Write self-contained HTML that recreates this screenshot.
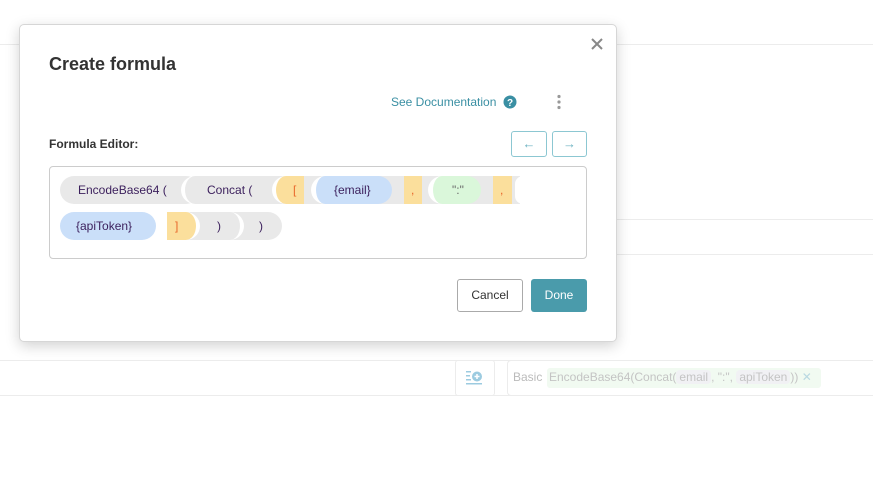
<!DOCTYPE html>
<html><head><style>
*{box-sizing:border-box;margin:0;padding:0}
body{width:873px;height:487px;background:#fff;position:relative;overflow:hidden;font-family:"Liberation Sans",sans-serif}
.a{position:absolute}
.ln{position:absolute;height:1px;background:#ececec}
.t{position:absolute;font-size:12px;line-height:28px;color:#3b1f5c;white-space:nowrap}
</style></head><body>
<div class="ln" style="left:0;right:0;top:44px"></div>
<div class="ln" style="left:617px;right:0;top:219px"></div>
<div class="ln" style="left:617px;right:0;top:254px"></div>
<div class="ln" style="left:0;right:0;top:360px"></div>
<div class="ln" style="left:0;right:0;top:395px"></div>
<div class="a" style="left:455px;top:360px;width:40px;height:36px;border:1px solid #ececec;border-radius:3px"></div>
<svg class="a" style="left:466px;top:370px" width="17" height="15" viewBox="0 0 17 15"><g fill="#9ccbe0"><rect x="0" y="1" width="5" height="1.5"/><rect x="0" y="5" width="4" height="1.5"/><rect x="0" y="9" width="5" height="1.5"/><rect x="0" y="13" width="16" height="1.5"/><circle cx="11" cy="6.5" r="5"/></g><path d="M11 4v5M8.5 6.5h5" stroke="#fff" stroke-width="1.5"/></svg>
<div class="a" style="left:507px;top:360px;width:380px;height:36px;border:1px solid #ececec;border-radius:4px"></div>
<div class="a" style="left:513px;top:370px;font-size:12px;color:#bbb">Basic</div>
<div class="a" style="left:547px;top:368px;width:274px;height:20px;background:#f1faf1;border-radius:3px"></div>
<div class="a" style="left:549px;top:370px;font-size:12px;color:#c4c4c4;white-space:nowrap">EncodeBase64(Concat(<span style="background:#f1f1f4;border-radius:4px;padding:0 3px">email</span>, ":", <span style="background:#f1f1f4;border-radius:4px;padding:0 3px">apiToken</span>)) <span style="color:#b9d9e2">✕</span></div>

<div class="a" style="left:19px;top:24px;width:598px;height:318px;background:#fff;border:1px solid #d6d6d6;border-radius:5px;box-shadow:0 4px 14px rgba(0,0,0,.18)"></div>
<div class="a" style="left:49px;top:54px;font-size:18px;font-weight:bold;color:#333">Create formula</div>
<svg class="a" style="left:591px;top:38px" width="12" height="12"><path d="M1 1L11 11M11 1L1 11" stroke="#888" stroke-width="2"/></svg>
<div class="a" style="left:391px;top:95px;font-size:12px;color:#3a8fa3">See Documentation</div>
<svg class="a" style="left:503px;top:95px" width="14" height="14"><circle cx="7" cy="7" r="6.5" fill="#3a8fa3"/><text x="7" y="11" font-size="10" font-weight="bold" fill="#fff" text-anchor="middle" font-family="Liberation Sans">?</text></svg>
<svg class="a" style="left:556px;top:94px" width="6" height="16"><g fill="#999"><circle cx="3" cy="2.5" r="1.6"/><circle cx="3" cy="8" r="1.6"/><circle cx="3" cy="13.5" r="1.6"/></g></svg>
<div class="a" style="left:49px;top:137px;font-size:12px;font-weight:bold;color:#333">Formula Editor:</div>
<div class="a" style="left:511px;top:131px;width:36px;height:26px;border:1px solid #8cc7d2;border-radius:3px;color:#6bb2c1;text-align:center;line-height:23px;font-size:13px">←</div>
<div class="a" style="left:552px;top:131px;width:35px;height:26px;border:1px solid #8cc7d2;border-radius:3px;color:#6bb2c1;text-align:center;line-height:23px;font-size:13px">→</div>
<div class="a" style="left:49px;top:166px;width:538px;height:93px;border:1px solid #ccc;border-radius:4px"></div>

<!-- row 1 -->
<div class="a" style="left:60px;top:176px;width:140px;height:28px;background:#e9e9e9;border-radius:14px"></div>
<div class="a" style="left:181px;top:176px;width:339px;height:28px;background:#e9e9e9;border-radius:14px 0 0 14px;border-left:4px solid #fff"></div>
<div class="a" style="left:272px;top:176px;width:32px;height:28px;background:#fbdf9c;border-radius:14px 0 0 14px;border-left:4px solid #fff"></div>
<div class="a" style="left:311px;top:176px;width:81px;height:28px;background:#cadff9;border-radius:14px;border-left:5px solid #fff"></div>
<div class="a" style="left:404px;top:176px;width:18px;height:28px;background:#fbdf9c"></div>
<div class="a" style="left:428px;top:176px;width:53px;height:28px;background:#daf7da;border-radius:14px;border-left:5px solid #fff"></div>
<div class="a" style="left:493px;top:176px;width:19px;height:28px;background:#fbdf9c"></div>
<div class="a" style="left:515px;top:176px;width:8px;height:28px;background:#fff;border-radius:14px 0 0 14px"></div>
<div class="t" style="left:78px;top:176px">EncodeBase64 (</div>
<div class="t" style="left:207px;top:176px">Concat (</div>
<div class="t" style="left:293px;top:176px;color:#e8672a">[</div>
<div class="t" style="left:334px;top:176px">{email}</div>
<div class="t" style="left:411px;top:176px;color:#e8672a">,</div>
<div class="t" style="left:452px;top:176px;color:#6a6a6a">":"</div>
<div class="t" style="left:500px;top:176px;color:#e8672a">,</div>
<!-- row 2 -->
<div class="a" style="left:200px;top:212px;width:82px;height:28px;background:#e9e9e9;border-radius:0 14px 14px 0"></div>
<div class="a" style="left:167px;top:212px;width:77px;height:28px;background:#e9e9e9;border-radius:0 14px 14px 0;border-right:4px solid #fff"></div>
<div class="a" style="left:167px;top:212px;width:33px;height:28px;background:#fbdf9c;border-radius:0 14px 14px 0;border-right:4px solid #fff"></div>
<div class="a" style="left:60px;top:212px;width:96px;height:28px;background:#cadff9;border-radius:14px"></div>
<div class="t" style="left:76px;top:212px">{apiToken}</div>
<div class="t" style="left:175px;top:212px;color:#e8672a">]</div>
<div class="t" style="left:217px;top:212px">)</div>
<div class="t" style="left:259px;top:212px">)</div>

<div class="a" style="left:457px;top:279px;width:66px;height:33px;border:1px solid #aaa;border-radius:3px;font-size:12px;color:#333;text-align:center;line-height:31px">Cancel</div>
<div class="a" style="left:531px;top:279px;width:56px;height:33px;background:#4a9bab;border-radius:3px;font-size:12px;color:#fff;text-align:center;line-height:33px">Done</div>
</body></html>
